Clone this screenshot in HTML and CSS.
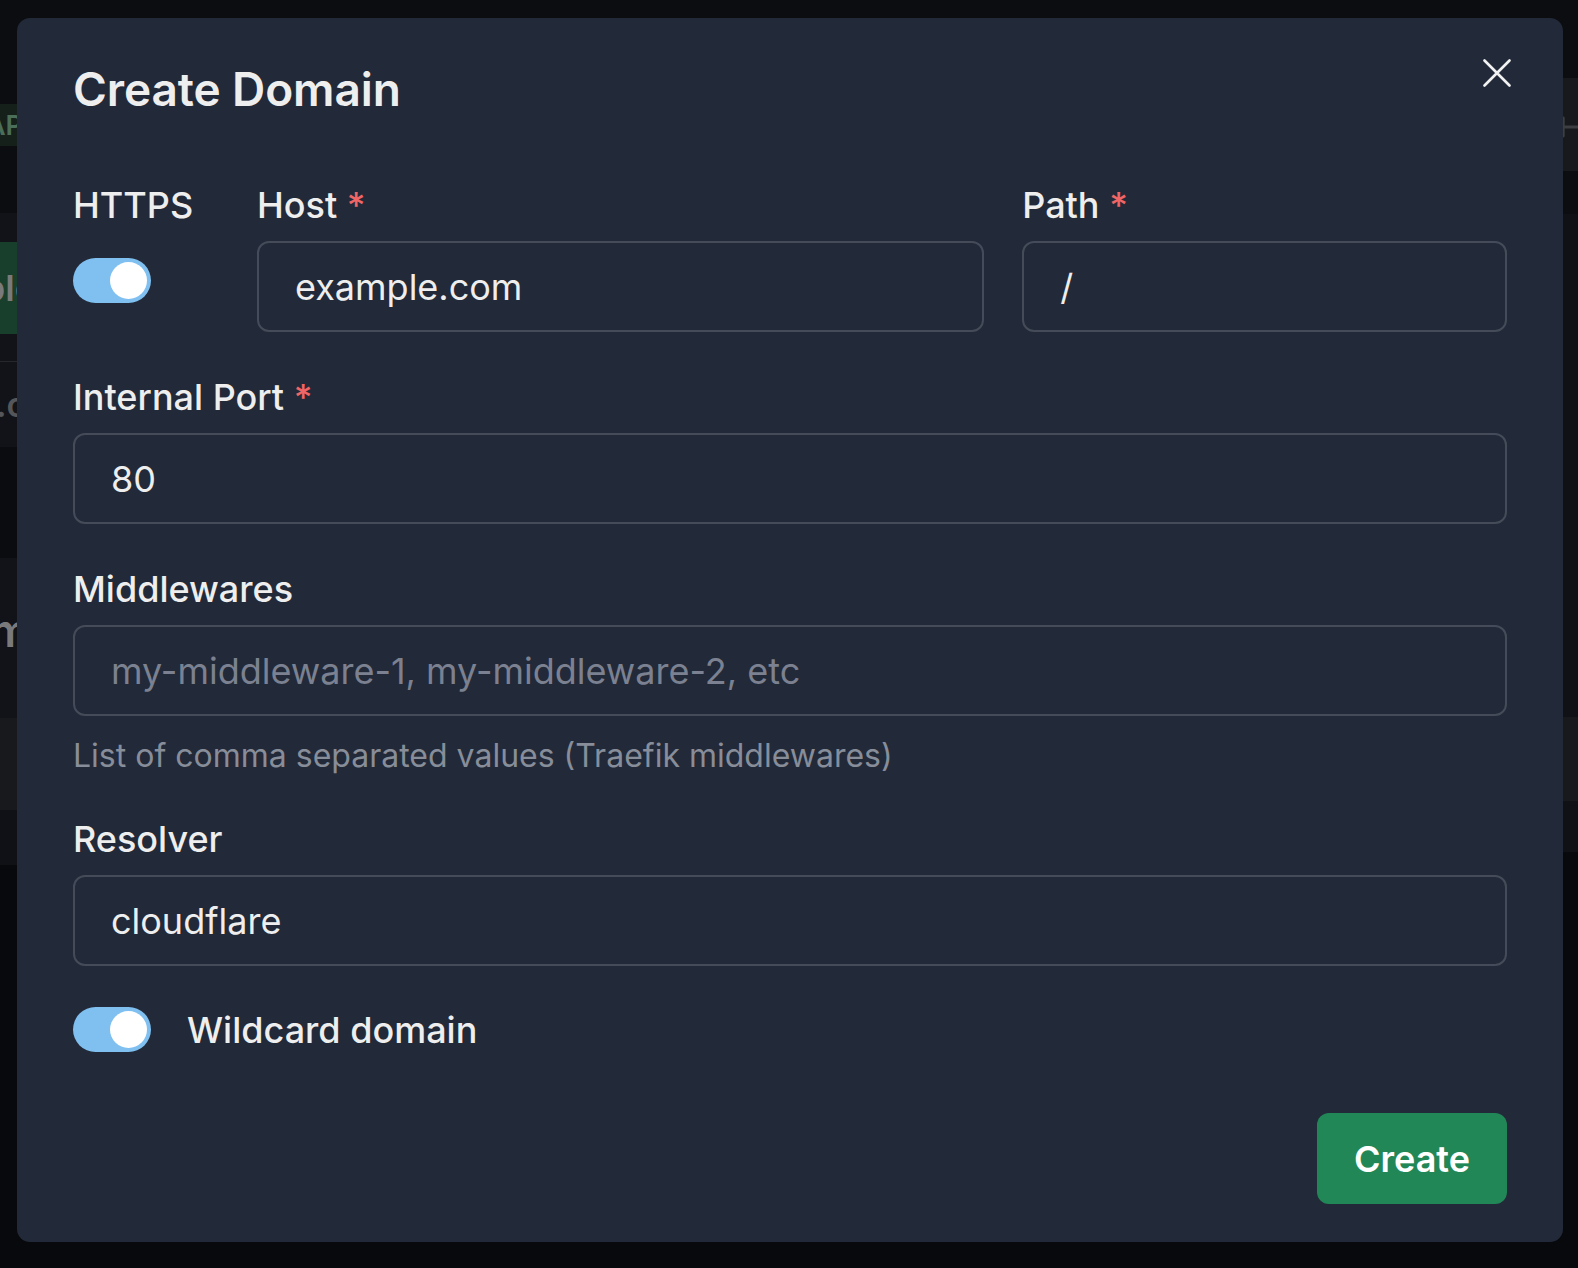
FILE: index.html
```html
<!DOCTYPE html>
<html lang="en">
<head>
<meta charset="utf-8">
<title>Create Domain</title>
<link rel="stylesheet" href="styles.css">
</head>
<body>
<div class="page">
  <div class="strip strip-left">
    <div class="blk b-dark" style="height:104px"></div>
    <div class="blk b-badge" style="height:42px"><span class="peek peek-ap">AP</span></div>
    <div class="blk b-dark" style="height:67px"></div>
    <div class="blk b-row" style="height:29px"></div>
    <div class="blk b-green" style="height:92px"><span class="peek peek-bl">ble</span></div>
    <div class="blk b-row" style="height:27px"></div>
    <div class="blk b-line" style="height:1px"></div>
    <div class="blk b-row" style="height:85px"><span class="peek peek-c">.co</span></div>
    <div class="blk b-darker" style="height:111px"></div>
    <div class="blk b-row" style="height:160px"><span class="peek peek-m">m</span></div>
    <div class="blk b-mid" style="height:92px"></div>
    <div class="blk b-row2" style="height:55px"></div>
    <div class="blk b-bottom grow"></div>
  </div>
  <div class="middle"></div>
  <div class="strip strip-right">
    <div class="blk b-dark" style="height:78px"></div>
    <div class="blk b-mid plus-row" style="height:93px">
      <svg class="plus" width="30" height="34" viewBox="0 0 30 34"><path d="M4 1 V33 M-10 17 H30" stroke="#3c3e42" stroke-width="5" stroke-linecap="round" fill="none"/></svg>
    </div>
    <div class="blk b-dark" style="height:43px"></div>
    <div class="blk b-row2" style="height:503px"></div>
    <div class="blk b-mid" style="height:84px"></div>
    <div class="blk b-row2" style="height:51px"></div>
    <div class="blk b-bottom grow"></div>
  </div>
</div>

<div class="modal" role="dialog" aria-labelledby="dlg-title">
  <div class="modal-header">
    <h2 id="dlg-title" class="modal-title">Create Domain</h2>
    <button class="close-btn" aria-label="Close">
      <svg width="28" height="28" viewBox="0 0 28 28"><path d="M1.5 1.5 L26.5 26.5 M26.5 1.5 L1.5 26.5" stroke="#f2f2f2" stroke-width="2.6" stroke-linecap="round" fill="none"/></svg>
    </button>
  </div>

  <form class="form">
    <div class="row-top">
      <div class="field">
        <label class="label">HTTPS</label>
        <div class="switch-wrap"><span class="switch on"><span class="knob"></span></span></div>
      </div>
      <div class="field">
        <label class="label">Host <span class="req">*</span></label>
        <input class="input" type="text" value="example.com">
      </div>
      <div class="field">
        <label class="label">Path <span class="req">*</span></label>
        <input class="input" type="text" value="/">
      </div>
    </div>

    <div class="field">
      <label class="label">Internal Port <span class="req">*</span></label>
      <input class="input" type="text" value="80">
    </div>

    <div class="field">
      <label class="label">Middlewares</label>
      <input class="input" type="text" placeholder="my-middleware-1, my-middleware-2, etc">
      <p class="desc">List of comma separated values (Traefik middlewares)</p>
    </div>

    <div class="field">
      <label class="label">Resolver</label>
      <input class="input" type="text" value="cloudflare">
    </div>

    <div class="check-row">
      <span class="switch on"><span class="knob"></span></span>
      <span class="check-label">Wildcard domain</span>
    </div>

    <div class="footer">
      <button type="button" class="btn-create">Create</button>
    </div>
  </form>
</div>
</body>
</html>
```

FILE: styles.css
```css
* { box-sizing: border-box; }

html, body {
  margin: 0;
  padding: 0;
  width: 1578px;
  height: 1268px;
  overflow: hidden;
  background: #080a0d;
  font-family: "Inter", "Noto Sans", sans-serif;
}

.page {
  display: flex;
  justify-content: space-between;
  height: 1268px;
}

.strip {
  display: flex;
  flex-direction: column;
  height: 100%;
  overflow: hidden;
}
.strip-left { width: 17px; }
.strip-right { width: 15px; }
.middle { flex: 1; background: linear-gradient(#0b0d10 0 50%, #07090c 50% 100%); }

.blk { position: relative; flex: none; overflow: hidden; display: flex; align-items: center; justify-content: flex-end; }
.grow { flex: 1; }
.b-dark { background: #0b0d10; }
.b-darker { background: #0a0c0f; }
.b-badge { background: #15201b; }
.b-row { background: #111318; }
.b-row2 { background: #0f1116; }
.b-green { background: #173f2b; }
.b-line { background: #25272b; }
.b-mid { background: #18191c; }
.b-bottom { background: #07090c; }

.peek {
  white-space: nowrap;
  font-weight: 600;
  line-height: 1;
}
.peek-ap { color: #4b6e58; font-size: 27px; margin-right: -6px; }
.peek-bl { color: #7a7a7a; font-size: 36px; margin-right: -19px; }
.peek-c { color: #555659; font-size: 34px; margin-right: -30px; }
.peek-m { color: #7a7a7c; font-size: 46px; margin-right: -14px; margin-top: -16px; }

.plus-row { justify-content: flex-start; }
.plus { display: block; margin-left: -2px; margin-top: 4px; }

/* Modal */
.modal {
  position: absolute;
  top: 18px;
  left: 17px;
  width: 1546px;
  height: 1224px;
  background: #222938;
  border-radius: 13px;
  padding: 43px 56px 37px;
  color: #ededed;
}

.modal-header {
  display: flex;
  justify-content: space-between;
  align-items: flex-start;
}

.modal-title {
  margin: 0;
  font-size: 46px;
  line-height: 56px;
  font-weight: 600;
  color: #eeeeee;
  letter-spacing: -0.1px;
}

.close-btn {
  background: none;
  border: none;
  padding: 0;
  margin: -2px -4px 0 0;
  width: 28px;
  height: 28px;
  cursor: pointer;
}
.close-btn svg { display: block; }

.form {
  margin-top: 66px;
  display: flex;
  flex-direction: column;
  gap: 43px;
}

.row-top {
  display: grid;
  grid-template-columns: 146px 3fr 2fr;
  column-gap: 38px;
}

.field {
  display: flex;
  flex-direction: column;
  gap: 14px;
}

.label {
  font-size: 36px;
  line-height: 44px;
  font-weight: 500;
  color: #eeeeee;
}
.req { color: #f06565; }

.input {
  display: block;
  width: 100%;
  height: 91px;
  border: 2px solid #454b58;
  border-radius: 12px;
  background: transparent;
  padding: 0 36px;
  font-family: "Inter", "Noto Sans", sans-serif;
  font-size: 36px;
  font-weight: 400;
  color: #eeeeee;
  outline: none;
}
.input::placeholder { color: #7b8190; }

.desc {
  margin: 8px 0 0;
  font-size: 32px;
  line-height: 36px;
  color: #878d99;
}

.switch-wrap { padding-top: 17px; }

.switch {
  display: flex;
  align-items: center;
  width: 78px;
  height: 45px;
  border-radius: 23px;
  background: #7fc0f1;
  padding: 4px;
}
.switch.on { justify-content: flex-end; }
.knob {
  width: 37px;
  height: 37px;
  border-radius: 50%;
  background: #ffffff;
}

.check-row {
  display: flex;
  align-items: center;
  gap: 36px;
  margin-top: -2px;
}
.check-label {
  font-size: 36px;
  line-height: 44px;
  font-weight: 500;
  color: #eeeeee;
}

.footer {
  display: flex;
  justify-content: flex-end;
  margin-top: 18px;
}

.btn-create {
  width: 190px;
  height: 91px;
  border: none;
  border-radius: 12px;
  background: #228757;
  color: #ffffff;
  font-family: "Inter", "Noto Sans", sans-serif;
  font-size: 36px;
  font-weight: 600;
  cursor: pointer;
}
```
